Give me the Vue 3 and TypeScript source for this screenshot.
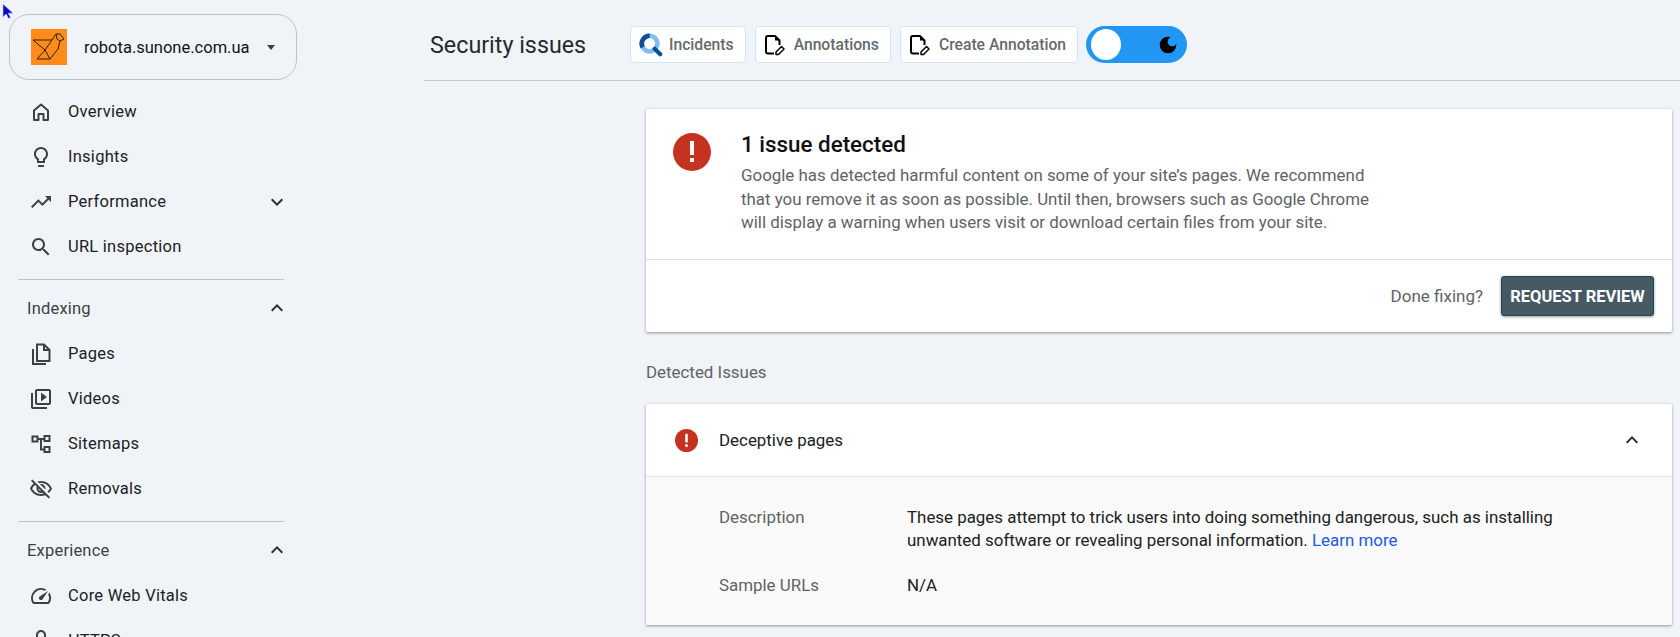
<script setup lang="ts">
type NavItem = {
  label: string;
  path?: string;
  chevron?: "up" | "down";
  custom?: "home" | "pages" | "sitemaps";
};

const topItems: NavItem[] = [
  { label: "Overview", custom: "home" },
  { label: "Insights", path: "M9 21c0 .55.45 1 1 1h4c.55 0 1-.45 1-1v-1H9v1zm3-19C8.14 2 5 5.14 5 9c0 2.38 1.19 4.47 3 5.74V17c0 .55.45 1 1 1h6c.55 0 1-.45 1-1v-2.26c1.81-1.27 3-3.36 3-5.74 0-3.86-3.14-7-7-7zm2.85 11.1l-.85.6V16h-4v-2.3l-.85-.6C7.8 12.16 7 10.63 7 9c0-2.76 2.24-5 5-5s5 2.24 5 5c0 1.63-.8 3.16-2.15 4.1z" },
  { label: "Performance", path: "M16 6l2.29 2.29-4.88 4.88-4-4L2 16.59 3.41 18l6-6 4 4 6.3-6.29L22 12V6z", chevron: "down" },
  { label: "URL inspection", path: "M15.5 14h-.79l-.28-.27C15.41 12.59 16 11.11 16 9.5 16 5.91 13.09 3 9.5 3S3 5.91 3 9.5 5.91 16 9.5 16c1.61 0 3.09-.59 4.23-1.57l.27.28v.79l5 4.99L20.49 19l-4.99-5zm-6 0C7.01 14 5 11.99 5 9.5S7.01 5 9.5 5 14 7.01 14 9.5 11.99 14 9.5 14z" },
];

const indexingItems: NavItem[] = [
  { label: "Pages", custom: "pages" },
  { label: "Videos", path: "M4 6H2v14c0 1.1.9 2 2 2h14v-2H4V6zm16-4H8c-1.1 0-2 .9-2 2v12c0 1.1.9 2 2 2h12c1.1 0 2-.9 2-2V4c0-1.1-.9-2-2-2zm0 14H8V4h12v12zM12 5.5v9l6-4.5z" },
  { label: "Sitemaps", custom: "sitemaps" },
  { label: "Removals", path: "M12 6c3.79 0 7.17 2.13 8.82 5.5-.59 1.22-1.42 2.27-2.41 3.12l1.41 1.41c1.39-1.23 2.49-2.77 3.18-4.53C21.27 7.11 17 4 12 4c-1.27 0-2.49.2-3.64.57l1.65 1.65C10.66 6.09 11.32 6 12 6zm-1.07 1.14L13 9.21c.57.25 1.03.71 1.28 1.28l2.07 2.07c.08-.34.14-.7.14-1.07C16.5 9.01 14.48 7 12 7c-.37 0-.72.05-1.07.14zM2.01 3.87l2.68 2.68C3.06 7.83 1.77 9.53 1 11.5 2.73 15.89 7 19 12 19c1.52 0 2.98-.29 4.32-.82l3.42 3.42 1.41-1.41L3.42 2.45 2.01 3.87zm7.5 7.5l2.61 2.61c-.04.01-.08.02-.12.02-1.38 0-2.5-1.12-2.5-2.5 0-.05.01-.08.01-.13zm-3.4-3.4l1.75 1.75c-.23.55-.36 1.15-.36 1.78 0 2.48 2.02 4.5 4.5 4.5.63 0 1.23-.13 1.77-.36l.98.98c-.88.24-1.8.38-2.75.38-3.79 0-7.17-2.13-8.82-5.5.7-1.43 1.72-2.61 2.93-3.53z" },
];

const experienceItems: NavItem[] = [
  { label: "Core Web Vitals", path: "M20.38 8.57l-1.23 1.85a8 8 0 0 1-.22 7.58H5.07A8 8 0 0 1 15.58 6.85l1.85-1.23A10 10 0 0 0 3.35 19a2 2 0 0 0 1.72 1h13.85a2 2 0 0 0 1.74-1 10 10 0 0 0-.27-10.44zm-9.79 6.84a2 2 0 0 0 2.83 0l5.66-8.49-8.49 5.66a2 2 0 0 0 0 2.83z" },
  { label: "HTTPS", path: "M18 8h-1V6c0-2.76-2.24-5-5-5S7 3.24 7 6v2H6c-1.1 0-2 .9-2 2v10c0 1.1.9 2 2 2h12c1.1 0 2-.9 2-2V10c0-1.1-.9-2-2-2zM9 6c0-1.66 1.34-3 3-3s3 1.34 3 3v2H9V6zm9 14H6V10h12v10z" },
];

const sections = [
  { items: topItems },
  { title: "Indexing", items: indexingItems },
  { title: "Experience", items: experienceItems },
];

const chevronUp = "M7.41 15.41L12 10.83l4.59 4.58L18 14l-6-6-6 6z";
const chevronDown = "M7.41 8.59L12 13.17l4.59-4.58L18 10l-6 6-6-6z";
const annotationButtons = ["Annotations", "Create Annotation"];
</script>

<template>
  <div class="page">
    <svg class="cursor" viewBox="0 0 12 16">
      <path d="M1 1v13l3.200-3 2.300 4.500 2-1-2.300-4.300H11z" fill="#0a0acb" stroke="#c3c8ee" stroke-width="0.600" />
    </svg>

    <aside class="sidebar">
      <div class="property">
        <svg class="logo" viewBox="0 0 36 36">
          <rect width="36" height="36" fill="#ff8c1a" />
          <path d="M2 11h19l4-6h4l4 5-4 2-2 8-8 10H6l8-9-12-10zM14 21l5 9M21 11l-7 10M25 5l1 5 3 2" fill="none" stroke="#2a1c0c" stroke-width="1" stroke-linejoin="round" />
        </svg>
        <span class="property-name">robota.sunone.com.ua</span>
        <span class="caret"></span>
      </div>

      <nav class="nav">
        <section v-for="(section, i) in sections" :key="i" class="nav-section">
          <div v-if="section.title" class="nav-title">
            <span>{{ section.title }}</span>
            <svg class="chevron" viewBox="0 0 24 24"><path :d="chevronUp" /></svg>
          </div>
          <a v-for="item in section.items" :key="item.label" class="nav-item">
            <svg v-if="item.path" class="nav-icon" viewBox="0 0 24 24"><path :d="item.path" /></svg>
            <svg v-else-if="item.custom === 'home'" class="nav-icon" viewBox="0 0 24 24">
              <path d="M5 10.500l7-6 7 6V20h-4.500v-6h-5v6H5z" fill="none" stroke="#3c4043" stroke-width="2" stroke-linejoin="round" />
            </svg>
            <svg v-else-if="item.custom === 'pages'" class="nav-icon" viewBox="0 0 24 24">
              <path d="M8 2.500h7l5.500 5.500v11H8zM15 2.500V8h5.500M4 7v15h13" fill="none" stroke="#3c4043" stroke-width="2" />
            </svg>
            <svg v-else class="nav-icon" viewBox="0 0 24 24">
              <path d="M3.500 4.500h5v5h-5zM15.500 4h5v5h-5zM15.500 15h5v5h-5zM8.500 7h3.500v10.500h3.500M12 7h3.500" fill="none" stroke="#3c4043" stroke-width="2" />
            </svg>
            <span class="nav-label">{{ item.label }}</span>
            <svg v-if="item.chevron" class="chevron" viewBox="0 0 24 24"><path :d="chevronDown" /></svg>
          </a>
        </section>
      </nav>
    </aside>

    <main class="main">
      <header class="topbar">
        <h1 class="page-title">Security issues</h1>
        <div class="actions">
          <button type="button" class="tool-btn">
            <svg class="tool-icon" viewBox="0 0 26 26">
              <circle cx="11.500" cy="11.500" r="8.500" fill="none" stroke="#7fbdf5" stroke-width="5" />
              <path d="M4 15.500A8.500 8.500 0 0 1 11.500 3" fill="none" stroke="#0d4f94" stroke-width="5" />
              <path d="M17 17l6 6" stroke="#0d4f94" stroke-width="4.500" stroke-linecap="round" />
            </svg>
            Incidents
          </button>
          <button v-for="label in annotationButtons" :key="label" type="button" class="tool-btn">
            <svg class="tool-icon" viewBox="0 0 24 24">
              <path d="M10 20.500H4a2 2 0 0 1-2-2V5a2 2 0 0 1 2-2h7l4.500 4.500V12" fill="none" stroke="#000" stroke-width="2" stroke-linejoin="round" />
              <path d="M11 3l4.500 4.500H11z" fill="#000" />
              <path d="M12 21.500v-2.500l5.500-5.500 2.500 2.500-5.500 5.500z" fill="none" stroke="#000" stroke-width="1.500" stroke-linejoin="round" />
            </svg>
            {{ label }}
          </button>
          <div class="theme-toggle">
            <span class="knob"></span>
            <svg class="moon" viewBox="0 0 24 24">
              <circle cx="12" cy="12" r="10" fill="#000" />
              <circle cx="17" cy="8" r="5.500" fill="#2196f3" />
            </svg>
          </div>
        </div>
      </header>

      <div class="content">
        <section class="card summary">
          <div class="summary-top">
            <svg class="alert-big" viewBox="0 0 38 38">
              <circle cx="19" cy="19" r="19" fill="#c5321f" />
              <rect x="17" y="8" width="4" height="14" fill="#fff" />
              <rect x="17" y="25" width="4" height="4" fill="#fff" />
            </svg>
            <div>
              <h2 class="summary-title">1 issue detected</h2>
              <p class="summary-text">
                Google has detected harmful content on some of your site’s pages. We recommend<br />
                that you remove it as soon as possible. Until then, browsers such as Google Chrome<br />
                will display a warning when users visit or download certain files from your site.
              </p>
            </div>
          </div>
          <div class="summary-foot">
            <span class="done">Done fixing?</span>
            <button type="button" class="review-btn">REQUEST REVIEW</button>
          </div>
        </section>

        <h3 class="section-label">Detected Issues</h3>

        <section class="card issue">
          <div class="issue-head">
            <svg class="alert-small" viewBox="0 0 24 24">
              <circle cx="12" cy="12" r="12" fill="#c5321f" />
              <rect x="10.700" y="5" width="2.600" height="9" fill="#fff" />
              <rect x="10.700" y="16" width="2.600" height="2.600" fill="#fff" />
            </svg>
            <span class="issue-name">Deceptive pages</span>
            <svg class="issue-chevron" viewBox="0 0 24 24"><path :d="chevronUp" /></svg>
          </div>
          <div class="issue-body">
            <div class="issue-key">Description</div>
            <div class="issue-value">
              These pages attempt to trick users into doing something dangerous, such as installing<br />
              unwanted software or revealing personal information. <a class="link">Learn more</a>
            </div>
            <div class="issue-key">Sample URLs</div>
            <div class="issue-value">N/A</div>
          </div>
        </section>
      </div>
    </main>
  </div>
</template>

<style>
html,
body {
  margin: 0;
  height: 637px;
  overflow: hidden;
  background: #f0f4f9;
}
</style>

<style scoped>
.page {
  position: relative;
  display: flex;
  height: 637px;
  overflow: hidden;
  background: #f0f4f9;
  font-family: Roboto, "Liberation Sans", sans-serif;
  color: #1f1f1f;
}

.cursor {
  position: absolute;
  left: 2px;
  top: 3px;
  width: 12px;
  height: 16px;
}

.sidebar {
  flex: 0 0 424px;
  padding: 14px 0 0 9px;
  box-sizing: border-box;
}

.property {
  display: flex;
  align-items: center;
  width: 288px;
  height: 66px;
  box-sizing: border-box;
  padding-left: 21px;
  border: 1px solid #bfc3c7;
  border-radius: 20px;
}

.logo {
  width: 36px;
  height: 36px;
}

.property-name {
  margin-left: 17px;
  font-size: 16.500px;
  color: #0b1520;
}

.caret {
  margin-left: 17px;
  border-left: 4.500px solid transparent;
  border-right: 4.500px solid transparent;
  border-top: 5px solid #3c4043;
}

.nav {
  width: 275px;
}

.nav-section + .nav-section {
  border-top: 1px solid #c0c3c7;
  margin-left: 9px;
  width: 266px;
}

.nav-section {
  padding-top: 9px;
  padding-bottom: 10px;
}

.nav-section + .nav-section {
  padding-top: 7px;
}

.nav-section + .nav-section .nav-item {
  margin-left: -9px;
  width: 275px;
}

.nav-item,
.nav-title {
  display: flex;
  align-items: center;
  height: 45px;
  font-size: 16.500px;
  color: #202124;
}

.nav-item {
  padding-left: 20px;
  box-sizing: border-box;
}

.nav-title {
  justify-content: space-between;
  height: 42px;
  margin-bottom: 2px;
  color: #3c4043;
  padding-left: 9px;
  letter-spacing: 0.2px;
}

.nav-icon {
  flex: none;
  width: 24px;
  height: 24px;
  fill: #3c4043;
}

.nav-label {
  margin-left: 15px;
  letter-spacing: 0.25px;
}

.chevron {
  flex: none;
  width: 24px;
  height: 24px;
  fill: #2b2f33;
  margin-left: auto;
  margin-right: -4.500px;
}

.main {
  flex: 1;
  min-width: 0;
}

.topbar {
  display: flex;
  align-items: center;
  height: 81px;
  box-sizing: border-box;
  padding: 9px 0 0 6px;
  border-bottom: 1px solid #c4c7ca;
}

.page-title {
  margin: 0;
  width: 200px;
  font-size: 23.300px;
  font-weight: 400;
  color: #27292c;
}

.actions {
  display: flex;
  align-items: center;
  gap: 9px;
}

.tool-btn {
  display: flex;
  align-items: center;
  gap: 6px;
  height: 37px;
  padding: 0 11px 0 8px;
  border: 1px solid #d3e3fa;
  border-radius: 4px;
  background: #fff;
  font-family: inherit;
  font-size: 15.700px;
  font-weight: 500;
  color: #666a6e;
}

.tool-icon {
  width: 24px;
  height: 24px;
}

.theme-toggle {
  position: relative;
  width: 101px;
  height: 37px;
  margin-left: -1px;
  border-radius: 19px;
  background: #2196f3;
}

.knob {
  position: absolute;
  left: 5px;
  top: 3px;
  width: 30px;
  height: 31px;
  border-radius: 50%;
  background: #fff;
}

.moon {
  position: absolute;
  right: 9px;
  top: 9px;
  width: 20px;
  height: 20px;
}

.content {
  padding: 28px 8px 0 222px;
}

.card {
  background: #fff;
  border-radius: 2px;
  box-shadow: 0 1px 3px rgba(60, 64, 67, 0.55);
}

.summary-top {
  display: flex;
  height: 151px;
  box-sizing: border-box;
  padding: 24px 0 0 27px;
  border-bottom: 1px solid #e0e0e0;
}

.alert-big {
  flex: none;
  width: 38px;
  height: 38px;
  margin-right: 30px;
}

.summary-title {
  margin: -3px 0 6px;
  font-size: 22.400px;
  line-height: 28px;
  font-weight: 500;
  color: #111;
}

.summary-text {
  margin: 0;
  font-size: 16.900px;
  line-height: 23.500px;
  color: #5f6368;
}

.summary-foot {
  display: flex;
  align-items: center;
  justify-content: flex-end;
  height: 72px;
  padding-right: 18px;
}

.done {
  font-size: 17px;
  color: #5f6368;
  margin-right: 18px;
}

.review-btn {
  width: 153px;
  height: 40px;
  padding: 0;
  border: 1px solid #1f4654;
  border-radius: 3px;
  background: #455a64;
  color: #fff;
  font-family: inherit;
  font-size: 16.500px;
  font-weight: 700;
  box-shadow: 0 1px 3px rgba(0, 0, 0, 0.4);
}

.section-label {
  margin: 0;
  padding: 30px 0 22px;
  font-size: 16.900px;
  line-height: 20px;
  font-weight: 400;
  color: #5f6368;
}

.issue-head {
  display: flex;
  align-items: center;
  height: 72px;
  padding: 0 28px 0 29px;
  border-bottom: 1px solid #e0e0e0;
}

.alert-small {
  width: 23px;
  height: 23px;
  margin-right: 21px;
}

.issue-name {
  font-size: 16.900px;
  color: #202124;
}

.issue-chevron {
  margin-left: auto;
  width: 24px;
  height: 24px;
  fill: #2b2f33;
}

.issue-body {
  display: grid;
  grid-template-columns: 188px 1fr;
  row-gap: 22px;
  height: 148px;
  box-sizing: border-box;
  align-content: start;
  padding: 29px 0 0 73px;
  background: #fafafa;
  font-size: 16.900px;
  line-height: 23px;
  border-radius: 0 0 2px 2px;
}

.issue-key {
  color: #5f6368;
}

.issue-value {
  color: #202124;
}

.link {
  color: #1a5be0;
}
</style>
